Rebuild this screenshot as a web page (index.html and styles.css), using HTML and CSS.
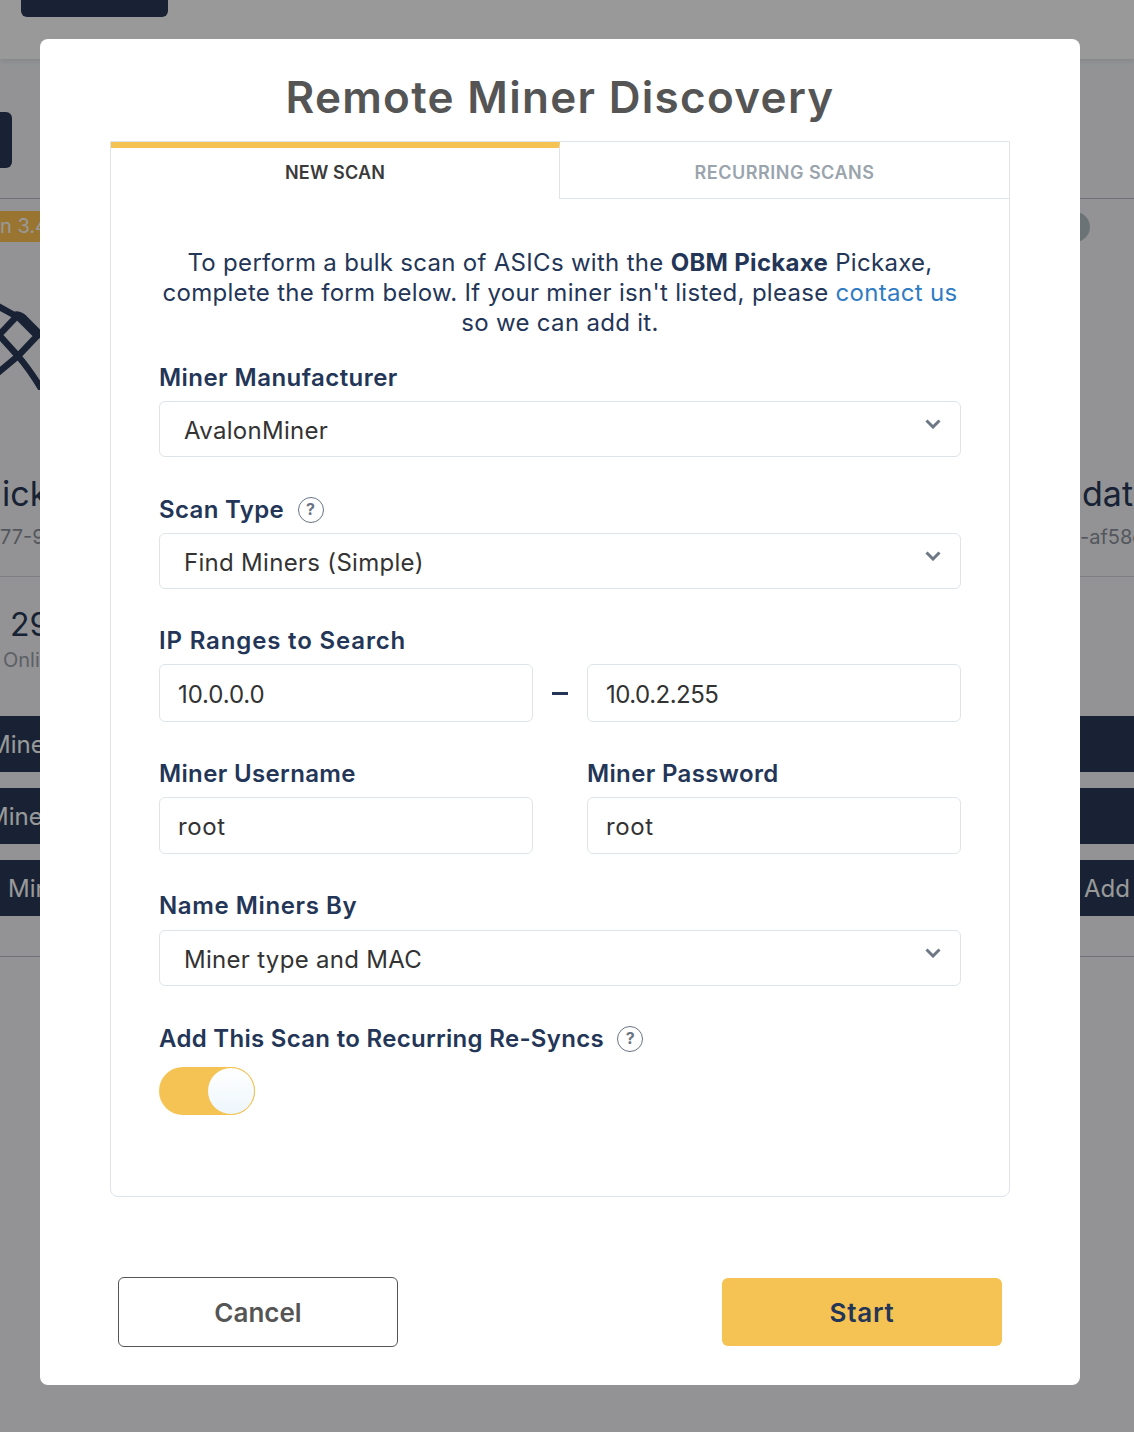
FILE: index.html
```html
<!DOCTYPE html>
<html lang="en">
<head>
    <meta charset="UTF-8">
    <title>Remote Miner Discovery</title>
    <link rel="stylesheet" href="styles.css">
</head>
<body>
    <!-- Page behind the modal, only the edges show -->
    <div class="page">
        <div class="topbar"><div class="top-btn"></div></div>
        <div class="subbar"><div class="sub-btn"></div></div>
        <div class="cards">
            <div class="card card-left">
                <div class="badge">n 3.4</div>
                <div class="logo">
                    <svg width="40" height="90" viewBox="0 0 40 90" fill="none" stroke="#283957" stroke-width="6.5" stroke-linejoin="round">
                        <path d="M17 16 L37 36 L18 56 L-1 35 Z"/>
                        <path d="M-4 5 L14 15 Q20 13 26 20 L44 38"/>
                        <path d="M18 56 L-6 76"/>
                        <path d="M18 56 Q30 70 42 90"/>
                    </svg>
                </div>
                <div class="card-name">ick</div>
                <div class="card-id">77-9c</div>
                <div class="stat">29</div>
                <div class="stat-label">Onli</div>
                <div class="card-btn card-btn-first"><span class="shift-a">Mine</span></div>
                <div class="card-btn"><span class="shift-b">Mine</span></div>
                <div class="card-btn"><span class="shift-c">Min</span></div>
            </div>
            <div class="card card-right">
                <div class="badge-round"></div>
                <div class="logo"></div>
                <div class="card-name">dat</div>
                <div class="card-id">-af58c</div>
                <div class="stat"></div>
                <div class="stat-label"></div>
                <div class="card-btn card-btn-first"></div>
                <div class="card-btn"></div>
                <div class="card-btn"><span class="shift-d">Add</span></div>
            </div>
        </div>
    </div>
    <div class="overlay"></div>

    <!-- Modal -->
    <div class="modal">
        <h1 class="modal-title">Remote Miner Discovery</h1>
        <div class="panel">
            <div class="tabs">
                <div class="tab active">NEW SCAN</div>
                <div class="tab">RECURRING SCANS</div>
            </div>
            <div class="panel-body">
                <p class="intro">To perform a bulk scan of ASICs with the <b>OBM Pickaxe</b> Pickaxe,<br>complete the form below. If your miner isn't listed, please <a href="#">contact us</a><br>so we can add it.</p>

                <div class="label label-first">Miner Manufacturer</div>
                <div class="select-wrap">
                    <select class="field select"><option>AvalonMiner</option></select>
                    <svg class="chevron" width="16" height="10" viewBox="0 0 16 10"><path d="M1.5 1.5 L8 8 L14.5 1.5" fill="none" stroke="#6e7885" stroke-width="3"/></svg>
                </div>

                <div class="label label-scan">Scan Type <span class="help">?</span></div>
                <div class="select-wrap">
                    <select class="field select"><option>Find Miners (Simple)</option></select>
                    <svg class="chevron" width="16" height="10" viewBox="0 0 16 10"><path d="M1.5 1.5 L8 8 L14.5 1.5" fill="none" stroke="#6e7885" stroke-width="3"/></svg>
                </div>

                <div class="label label-ip">IP Ranges to Search</div>
                <div class="field-row">
                    <input class="field input input-from" value="10.0.0.0">
                    <div class="dash-box"><div class="dash"></div></div>
                    <input class="field input input-tight" value="10.0.2.255">
                </div>

                <div class="field-row creds">
                    <div class="col">
                        <div class="label label-cred">Miner Username</div>
                        <input class="field input input-cred" value="root">
                    </div>
                    <div class="col">
                        <div class="label label-cred">Miner Password</div>
                        <input class="field input input-cred" value="root">
                    </div>
                </div>

                <div class="label label-name">Name Miners By</div>
                <div class="select-wrap">
                    <select class="field select"><option>Miner type and MAC</option></select>
                    <svg class="chevron" width="16" height="10" viewBox="0 0 16 10"><path d="M1.5 1.5 L8 8 L14.5 1.5" fill="none" stroke="#6e7885" stroke-width="3"/></svg>
                </div>

                <div class="label label-add">Add This Scan to Recurring Re-Syncs <span class="help">?</span></div>
                <div class="toggle"><div class="knob"></div></div>
            </div>
        </div>
        <div class="actions">
            <div class="btn btn-cancel">Cancel</div>
            <div class="btn btn-start">Start</div>
        </div>
    </div>
</body>
</html>
```

FILE: styles.css
```css
* {
    margin: 0;
    padding: 0;
    box-sizing: border-box;
}

html, body {
    width: 1134px;
    height: 1432px;
    overflow: hidden;
}

body {
    position: relative;
    font-family: Inter, "Noto Sans", sans-serif;
    color: #243657;
    background: #f5f6f9;
}

/* Page behind the modal */
.page {
    height: 1432px;
    overflow: hidden;
}

.topbar {
    height: 59px;
    background: #fff;
    padding-left: 21px;
    box-shadow: 0 2px 6px rgba(0, 0, 0, 0.1);
}

.top-btn {
    width: 147px;
    height: 17px;
    background: #283957;
    border-radius: 0 0 6px 6px;
}

.subbar {
    height: 140px;
    padding-top: 53px;
    border-bottom: 1px solid #b8bec8;
}

.sub-btn {
    width: 12px;
    height: 56px;
    background: #283957;
    border-radius: 0 6px 6px 0;
}

.cards {
    display: flex;
    justify-content: space-between;
    height: 758px;
    border-bottom: 1px solid #b8bec8;
}

.card {
    width: 54px;
    padding-top: 12px;
    overflow: hidden;
    white-space: nowrap;
}

.card-left {
    width: 40px;
}

.badge {
    height: 31px;
    background: #ffc353;
    color: #fff;
    font-size: 20px;
    line-height: 31px;
}

.badge-round {
    width: 30px;
    height: 30px;
    margin: 1px 0 0 -20px;
    background: #b4c0c5;
    border-radius: 50%;
}

.logo {
    height: 233px;
    padding-top: 58px;
}

.card-name {
    height: 37px;
    padding-left: 2px;
    font-size: 34px;
    line-height: 37px;
    color: #283957;
}

.card-id {
    height: 65px;
    padding-top: 7px;
    margin-bottom: 29px;
    font-size: 20px;
    line-height: 36px;
    color: #8b919c;
    border-bottom: 1px solid #cfd3da;
}

.stat {
    height: 38px;
    padding-left: 10px;
    font-size: 32px;
    line-height: 38px;
    color: #283957;
}

.stat-label {
    height: 72px;
    padding-left: 3px;
    font-size: 20px;
    line-height: 32px;
    color: #9aa0aa;
}

.card-btn {
    height: 56px;
    margin-bottom: 16px;
    background: #283957;
    color: #fff;
    font-size: 24px;
    line-height: 58px;
}

.shift-a { margin-left: -11px; }
.shift-b { margin-left: -13px; }
.shift-c { margin-left: 8px; }
.shift-d { margin-left: 4px; }

.overlay {
    position: absolute;
    inset: 0;
    background: rgba(0, 0, 0, 0.4);
}

/* Modal */
.modal {
    position: absolute;
    left: 40px;
    top: 39px;
    width: 1040px;
    height: 1346px;
    padding: 0 70px;
    background: #fff;
    border-radius: 8px;
}

.modal-title {
    height: 102px;
    font-size: 44px;
    font-weight: 600;
    letter-spacing: 1.3px;
    line-height: 116px;
    text-align: center;
    color: #555;
}

.panel {
    height: 1056px;
    border: 1px solid #dee5ea;
    border-radius: 0 0 8px 8px;
}

.tabs {
    display: flex;
    height: 57px;
}

.tab {
    flex: 1;
    padding-top: 7px;
    font-size: 18px;
    font-weight: 600;
    letter-spacing: 0.5px;
    line-height: 48px;
    text-align: center;
    color: #9aa4ad;
    border-bottom: 1px solid #dee5ea;
}

.tab.active {
    flex: none;
    width: 449px;
    padding-top: 1px;
    letter-spacing: 0.15px;
    color: #3a3a3a;
    border-top: 6px solid #f4c353;
    border-right: 1px solid #dee5ea;
    border-bottom: 0;
}

.panel-body {
    padding: 49px 48px 0;
}

.intro {
    font-size: 24px;
    letter-spacing: 0.3px;
    line-height: 30px;
    text-align: center;
}

.intro a {
    color: #2f7cc4;
    text-decoration: none;
}

.label {
    display: flex;
    align-items: center;
    font-size: 24px;
    font-weight: 600;
    letter-spacing: 0.35px;
    line-height: 30px;
    white-space: pre;
}

.label-first { margin-top: 25px; margin-bottom: 8px; letter-spacing: 0.45px; }
.label-scan { margin-top: 38px; margin-bottom: 8px; }
.label-ip { margin-top: 37px; margin-bottom: 8px; letter-spacing: 0.85px; }
.label-cred { margin-top: 37px; margin-bottom: 8px; }
.label-name { margin-top: 37px; margin-bottom: 9px; letter-spacing: 0.6px; }
.label-add { margin-top: 38px; margin-bottom: 13px; letter-spacing: 0.3px; }

.help {
    width: 26px;
    height: 26px;
    margin-left: 7px;
    border: 1.5px solid #6a7483;
    border-radius: 50%;
    font-size: 16px;
    font-weight: 700;
    letter-spacing: 0;
    line-height: 23px;
    text-align: center;
    color: #6a7483;
}

.select-wrap {
    position: relative;
}

.field {
    display: block;
    width: 100%;
    border: 1px solid #dee5ea;
    border-radius: 6px;
    background: #fff;
    font-family: inherit;
    font-size: 24px;
    letter-spacing: 0.3px;
    color: #333;
    outline: none;
}

.select {
    height: 56px;
    padding-top: 2px;
    padding-left: 24px;
    appearance: none;
}

.chevron {
    position: absolute;
    right: 20px;
    top: 18px;
}

.input {
    height: 58px;
    padding-top: 2px;
    padding-left: 18px;
}

.input-from {
    letter-spacing: -0.1px;
}

.input-tight {
    letter-spacing: -0.5px;
}

.input-cred {
    height: 57px;
    letter-spacing: 0.6px;
}

.field-row {
    display: flex;
}

.field-row > .input,
.col {
    width: 374px;
}

.dash-box {
    display: flex;
    align-items: center;
    justify-content: center;
    width: 54px;
}

.dash {
    width: 16px;
    height: 3px;
    background: #243657;
}

.creds {
    justify-content: space-between;
}

.toggle {
    display: flex;
    justify-content: flex-end;
    width: 96px;
    height: 48px;
    background: #f4c353;
    border-radius: 24px;
}

.knob {
    width: 48px;
    height: 48px;
    border: 1px solid #f4c353;
    border-radius: 50%;
    background: linear-gradient(#fff, #edf6fc);
}

.actions {
    display: flex;
    justify-content: space-between;
    align-items: center;
    height: 70px;
    margin: 80px 8px 0;
}

.btn {
    display: flex;
    align-items: center;
    justify-content: center;
    width: 280px;
    border-radius: 6px;
    font-size: 26px;
    font-weight: 600;
}

.btn-cancel {
    height: 70px;
    border: 1px solid #555;
    color: #555;
}

.btn-start {
    height: 68px;
    background: #f4c353;
    letter-spacing: 0.8px;
    color: #243657;
}
```
